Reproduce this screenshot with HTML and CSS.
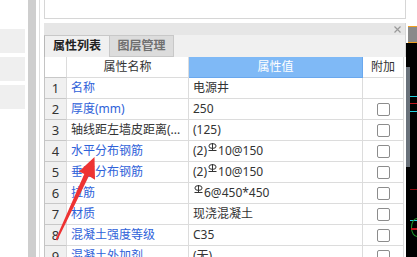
FILE: index.html
```html
<!DOCTYPE html>
<html lang="zh-CN">
<head>
    <meta charset="UTF-8">
    <meta name="viewport" content="width=device-width, initial-scale=1.0">
    <title>属性列表</title>
    <link rel="stylesheet" href="styles.css">
</head>
<body>
    <div class="app">
        <div class="side">
            <div class="side__box"></div>
            <div class="side__box"></div>
            <div class="side__box"></div>
        </div>
        <div class="splitter"></div>
        <div class="gutter"></div>

        <div class="panel">
            <div class="panel__top"></div>
            <div class="panel__title">
                <svg class="panel__close" width="7" height="7" viewBox="0 0 7 7">
                    <path d="M0.5 0.5 L6.5 6.5 M6.5 0.5 L0.5 6.5" stroke="#9a9a9a" stroke-width="1.2"/>
                </svg>
            </div>
            <div class="tabs">
                <div class="tab tab--active">属性列表</div>
                <div class="tab">图层管理</div>
            </div>

            <div class="grid">
                <div class="cell cell--idx cell--head"></div>
                <div class="cell cell--head cell--center">属性名称</div>
                <div class="cell cell--head cell--blue cell--center">属性值</div>
                <div class="cell cell--head cell--center">附加</div>

                <div class="cell cell--idx">1</div>
                <div class="cell cell--link">名称</div>
                <div class="cell">电源井</div>
                <div class="cell cell--check"></div>

                <div class="cell cell--idx">2</div>
                <div class="cell cell--link">厚度(mm)</div>
                <div class="cell">250</div>
                <div class="cell cell--check"><span class="checkbox"></span></div>

                <div class="cell cell--idx">3</div>
                <div class="cell">轴线距左墙皮距离(...</div>
                <div class="cell">(125)</div>
                <div class="cell cell--check"><span class="checkbox"></span></div>

                <div class="cell cell--idx">4</div>
                <div class="cell cell--link">水平分布钢筋</div>
                <div class="cell">(2)<svg class="rebar" width="9" height="8" viewBox="0 0 9 8"><ellipse cx="4.5" cy="3" rx="3.6" ry="2.4" fill="none" stroke="#333" stroke-width="1"/><path d="M4.5 0 V7.5 M0.5 7.5 H8.5" stroke="#333" stroke-width="1"/></svg>10@150</div>
                <div class="cell cell--check"><span class="checkbox"></span></div>

                <div class="cell cell--idx">5</div>
                <div class="cell cell--link">垂直分布钢筋</div>
                <div class="cell">(2)<svg class="rebar" width="9" height="8" viewBox="0 0 9 8"><ellipse cx="4.5" cy="3" rx="3.6" ry="2.4" fill="none" stroke="#333" stroke-width="1"/><path d="M4.5 0 V7.5 M0.5 7.5 H8.5" stroke="#333" stroke-width="1"/></svg>10@150</div>
                <div class="cell cell--check"><span class="checkbox"></span></div>

                <div class="cell cell--idx">6</div>
                <div class="cell cell--link">拉筋</div>
                <div class="cell"><svg class="rebar" width="9" height="8" viewBox="0 0 9 8"><ellipse cx="4.5" cy="3" rx="3.6" ry="2.4" fill="none" stroke="#333" stroke-width="1"/><path d="M4.5 0 V7.5 M0.5 7.5 H8.5" stroke="#333" stroke-width="1"/></svg>6@450*450</div>
                <div class="cell cell--check"><span class="checkbox"></span></div>

                <div class="cell cell--idx">7</div>
                <div class="cell cell--link">材质</div>
                <div class="cell">现浇混凝土</div>
                <div class="cell cell--check"><span class="checkbox"></span></div>

                <div class="cell cell--idx">8</div>
                <div class="cell cell--link">混凝土强度等级</div>
                <div class="cell">C35</div>
                <div class="cell cell--check"><span class="checkbox"></span></div>

                <div class="cell cell--idx">9</div>
                <div class="cell cell--link">混凝土外加剂</div>
                <div class="cell">(无)</div>
                <div class="cell cell--check"><span class="checkbox"></span></div>
            </div>
        </div>

        <div class="canvas">
            <div class="canvas__white"></div>
            <div class="canvas__bar"></div>
            <div class="canvas__black">
                <div class="canvas__strip"></div>
                <div class="canvas__line canvas__line--cyan" style="top: 53px;"></div>
                <div class="canvas__line canvas__line--red" style="top: 60px;"></div>
                <div class="canvas__line canvas__line--cyan" style="top: 68px;"></div>
                <div class="canvas__line canvas__line--dark" style="top: 146px;"></div>
                <div class="canvas__line canvas__line--cyan" style="top: 177px;"></div>
                <div class="canvas__ring"></div>
                <div class="canvas__line canvas__line--bar" style="top: 185px;"></div>
            </div>
        </div>
    </div>

    <!-- red annotation arrow drawn over the table -->
    <svg class="arrow" width="417" height="257" viewBox="0 0 417 257">
        <polygon points="55.6,239.6 84.3,173.9 79,171.5 94.5,157 95,179.8 88.9,176.1 57.2,240.4" fill="#ee3333"/>
    </svg>
</body>
</html>
```

FILE: styles.css
```css
body {
    margin: 0;
    width: 417px;
    height: 257px;
    overflow: hidden;
    background-color: #ffffff;
    font-family: "Noto Sans", "Noto Sans CJK SC", sans-serif;
    font-size: 12px;
    color: #333333;
    position: relative;
}

.app {
    display: flex;
    height: 257px;
}

/* left tool strip */
.side {
    width: 28px;
    padding-top: 29px;
    display: flex;
    flex-direction: column;
    gap: 4px;
}

.side__box {
    width: 25px;
    height: 24px;
    background-color: #efefef;
}

.splitter {
    width: 8px;
    background-color: #cecece;
}

.gutter {
    width: 3px;
    border-right: 1px solid #dedede;
    margin-right: 4px;
}

/* property panel */
.panel {
    width: 362px;
    display: flex;
    flex-direction: column;
}

.panel > * {
    flex-shrink: 0;
}

.panel__top {
    height: 18px;
    border: 1px solid #d6d6d6;
    border-top: none;
}

.panel__title {
    margin-top: 4px;
    height: 12px;
    background-color: #e6e6e6;
    border-right: 1px solid #d6d6d6;
    display: flex;
    justify-content: flex-end;
    align-items: center;
    padding-right: 4px;
}

.tabs {
    height: 22px;
    background-color: #f0f0f0;
    border-right: 1px solid #d6d6d6;
    display: flex;
}

.tab {
    width: 64px;
    height: 22px;
    box-sizing: border-box;
    border: 1px solid #c8c8c8;
    border-left: none;
    background-color: #dcdcdc;
    color: #707070;
    line-height: 20px;
    text-align: center;
    font-weight: 700;
}

.tab--active {
    width: 66px;
    border-left: 1px solid #b8b8b8;
    border-bottom: none;
    background-color: #f0f0f0;
    color: #222222;
}

/* attribute grid */
.grid {
    display: grid;
    grid-template-columns: 22px 122px 174px 41px;
    grid-auto-rows: 21px;
    border-left: 1px solid #c4c4c4;
    width: 359px;
    box-sizing: border-box;
}

.cell {
    box-sizing: border-box;
    border-right: 1px solid #dcdcdc;
    border-bottom: 1px solid #dcdcdc;
    padding: 0 4px;
    line-height: 20px;
    white-space: nowrap;
    overflow: hidden;
}

.cell--idx {
    background-color: #f0f0f0;
    border-bottom-color: #c8c8c8;
    text-align: center;
    padding: 0;
    font-size: 13px;
}

.cell--head {
    background-color: #ffffff;
}

.cell--center {
    text-align: center;
}

.cell--blue {
    background-color: #7fb9f6;
    border-color: #6aa8ee;
    color: #ffffff;
}

.cell--link {
    color: #2f62d9;
}

.cell--check {
    display: flex;
    justify-content: center;
    align-items: center;
}

.checkbox {
    width: 13px;
    height: 13px;
    box-sizing: border-box;
    border: 1px solid #8c8c8c;
    border-radius: 2px;
    background-color: #ffffff;
}

.rebar {
    vertical-align: 4px;
    margin: 0 1px;
}

/* drawing canvas peeking in on the right */
.canvas {
    width: 11px;
    display: flex;
    flex-direction: column;
}

.canvas__white {
    height: 26px;
}

.canvas__bar {
    height: 15px;
    margin-left: 2px;
    background-color: #8a8a8a;
    border-top: 1px solid #f0a020;
    border-bottom: 1px solid #f0a020;
}

.canvas__black {
    flex: 1;
    background-color: #000000;
    position: relative;
    overflow: hidden;
}

.canvas__strip {
    position: absolute;
    left: 0;
    top: 24px;
    width: 4px;
    height: 100px;
    background-color: #69717a;
}

.canvas__line {
    position: absolute;
    left: 4px;
    right: 0;
    height: 1px;
}

.canvas__line--cyan {
    background-color: #1fd0e0;
}

.canvas__line--red {
    background-color: #c0141e;
}

.canvas__line--dark {
    background-color: #8a0a10;
}

.canvas__line--bar {
    height: 2px;
    left: 5px;
    background-color: #c0141e;
}

.canvas__ring {
    position: absolute;
    left: 5px;
    top: 175px;
    width: 12px;
    height: 19px;
    box-sizing: border-box;
    border: 1px solid #1f9a2a;
    border-radius: 50%;
}

.arrow {
    position: absolute;
    left: 0;
    top: 0;
    pointer-events: none;
}
```
